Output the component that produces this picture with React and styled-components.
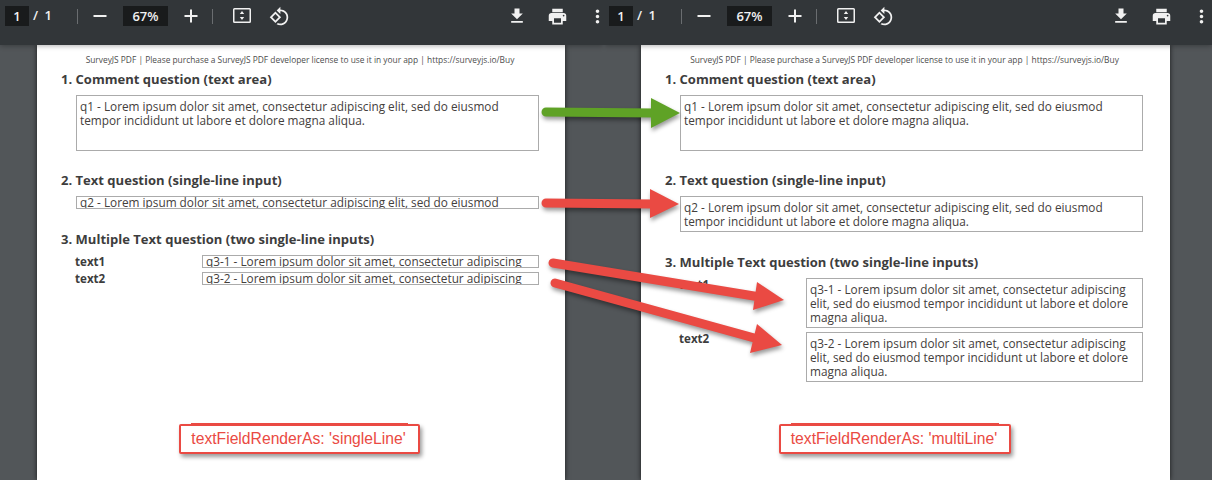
import React from "react";
import styled, { createGlobalStyle } from "styled-components";

const LOREM = "Lorem ipsum dolor sit amet, consectetur adipiscing elit, sed do eiusmod tempor incididunt ut labore et dolore magna aliqua.";
const NOTICE = "SurveyJS PDF | Please purchase a SurveyJS PDF developer license to use it in your app | https://surveyjs.io/Buy";

const GlobalStyle = createGlobalStyle`
  html, body {
    margin: 0;
    padding: 0;
    background: #525659;
  }
`;

const Screen = styled.div`
  position: relative;
  display: flex;
  width: 1212px;
  height: 480px;
  overflow: hidden;
  font-family: "Open Sans", sans-serif;
`;

const Viewer = styled.div`
  display: flex;
  flex-direction: column;
  flex: 0 0 ${(p) => p.$width}px;
  height: 480px;
`;

const Toolbar = styled.div`
  position: relative;
  z-index: 1;
  display: flex;
  align-items: flex-start;
  flex: 0 0 45px;
  padding: 6px ${(p) => p.$endPad}px 0 5px;
  box-sizing: border-box;
  background: #323639;
  color: #f1f1f1;
  box-shadow: 0 1px 5px rgba(0, 0, 0, 0.3);
  clip-path: inset(0 0 -10px 0);
`;

const PageInput = styled.div`
  width: 24px;
  height: 20px;
  background: #191b1c;
  font-size: 13px;
  font-weight: 600;
  line-height: 20px;
  text-align: center;
`;

const PageCount = styled.div`
  width: 44px;
  padding-left: 4px;
  font-size: 13px;
  font-weight: 600;
  line-height: 19px;
  word-spacing: 3px;
  white-space: nowrap;
`;

const Divider = styled.div`
  flex: none;
  width: 1px;
  height: 15px;
  margin: 3px 0 0 ${(p) => p.$left || 0}px;
  background: #6a6d70;
`;

const ZoomBox = styled.div`
  width: 45px;
  height: 20px;
  margin: 0 16px;
  background: #191b1c;
  font-size: 13px;
  font-weight: 600;
  line-height: 20px;
  text-align: center;
`;

const Icon = styled.svg`
  display: block;
  flex: none;
  width: ${(p) => p.$size}px;
  height: ${(p) => p.$size}px;
  margin: ${(p) => p.$top || 0}px ${(p) => p.$right || 0}px 0 ${(p) => p.$left || 0}px;
  fill: #f1f1f1;
`;

const Spacer = styled.div`
  flex: 1;
`;

const PageArea = styled.div`
  flex: 1;
  padding-left: 37px;
  background: #525659;
`;

const Page = styled.div`
  position: relative;
  width: ${(p) => p.$width}px;
  height: 435px;
  padding-top: 9px;
  box-sizing: border-box;
  background: #fff;
  box-shadow: 0 0 5px rgba(0, 0, 0, 0.7);
  color: #3d3d3d;
`;

const Notice = styled.div`
  padding-right: 2px;
  font-size: 8.37px;
  line-height: 12px;
  text-align: center;
  color: #4d4d4d;
  white-space: nowrap;
`;

const Content = styled.div`
  width: 463px;
  margin-left: 39px;
`;

const Heading = styled.h2`
  margin: ${(p) => p.$top}px 0 0 -15px;
  font-size: 13.04px;
  font-weight: 700;
  line-height: 18px;
  color: #3d3d3d;
  white-space: nowrap;
`;

const AnswerBox = styled.div`
  box-sizing: border-box;
  height: ${(p) => p.$height}px;
  margin-top: ${(p) => p.$top || 0}px;
  padding: ${(p) => (p.$single ? "0 3px" : "3px 3px 0")};
  overflow: hidden;
  border: 1px solid #ababab;
  font-size: 11.8px;
  line-height: ${(p) => (p.$single ? "11px" : "14.2px")};
  color: #44403c;
  white-space: ${(p) => (p.$single ? "nowrap" : "normal")};
`;

const TextGrid = styled.div`
  display: grid;
  grid-template-columns: 126px 337px;
  row-gap: 4px;
  margin-top: 7px;
`;

const FieldLabel = styled.div`
  margin-left: -1px;
  font-size: 11.6px;
  font-weight: 700;
  line-height: 13px;
  color: #3d3d3d;
`;

const Callout = styled.div`
  position: absolute;
  top: 379px;
  left: ${(p) => p.$left}px;
  box-sizing: border-box;
  width: ${(p) => p.$width}px;
  height: 30px;
  padding-right: 2px;
  border: 2px solid #ea4a43;
  border-radius: 2px;
  background: #fff;
  box-shadow: 2px 3px 4px rgba(0, 0, 0, 0.4);
  color: #ea4a43;
  font-family: "Liberation Sans", Arial, sans-serif;
  font-size: 15.7px;
  line-height: 25px;
  text-align: center;
  white-space: nowrap;

  &::before {
    content: "";
    position: absolute;
    top: -3px;
    left: 10px;
    right: 10px;
    height: 2px;
    background: #ea4a43;
  }
`;

const ArrowLayer = styled.svg`
  position: absolute;
  top: 0;
  left: 0;
  z-index: 2;
  width: 1212px;
  height: 480px;
  pointer-events: none;
  filter: drop-shadow(1px 3px 2px rgba(0, 0, 0, 0.4));
`;

const DownloadIcon = () => (
  <Icon viewBox="0 0 24 24" $size={20}>
    <path d="M19 9h-4V3H9v6H5l7 7 7-7zM5 18v2h14v-2H5z" />
  </Icon>
);

const PrintIcon = () => (
  <Icon viewBox="0 0 24 24" $size={21} $left={19.5}>
    <path d="M19 8H5c-1.660 0-3 1.340-3 3v6h4v4h12v-4h4v-6c0-1.660-1.340-3-3-3zm-3 11H8v-5h8v5zm3-7c-.55 0-1-.45-1-1s.45-1 1-1 1 .45 1 1-.45 1-1 1zm-1-9H6v4h12V3z" />
  </Icon>
);

const MoreIcon = () => (
  <Icon viewBox="0 0 24 24" $size={21} $left={19} $right={-3.5}>
    <path d="M12 8c1.100 0 2-.9 2-2s-.9-2-2-2-2 .9-2 2 .9 2 2 2zm0 2c-1.100 0-2 .9-2 2s.9 2 2 2 2-.9 2-2-.9-2-2-2zm0 6c-1.100 0-2 .9-2 2s.9 2 2 2 2-.9 2-2-.9-2-2-2z" />
  </Icon>
);

const MinusIcon = () => (
  <Icon viewBox="0 0 14 14" $size={14} $left={15} $top={3}>
    <rect x="0.5" y="6" width="13" height="2" />
  </Icon>
);

const PlusIcon = () => (
  <Icon viewBox="0 0 14 14" $size={14} $top={3}>
    <path d="M6 .5h2V6h5.500v2H8v5.500H6V8H.5V6H6z" />
  </Icon>
);

const FitIcon = () => (
  <Icon viewBox="0 0 20 20" $size={20} $left={19}>
    <path d="M2.500 2h15A1.500 1.500 0 0 1 19 3.500v12a1.500 1.500 0 0 1-1.500 1.500h-15A1.500 1.500 0 0 1 1 15.500v-12A1.500 1.500 0 0 1 2.500 2zm0 1.500v12h15v-12h-15z" fillRule="evenodd" />
    <path d="M10 5l2.200 3H7.800zM10 14l-2.200-3h4.400z" />
  </Icon>
);

const RotateIcon = () => (
  <Icon viewBox="0 0 24 24" $size={21} $left={17}>
    <path d="M7.340 6.410L.86 12.900l6.490 6.480 6.490-6.480-6.500-6.490zM3.690 12.900l3.660-3.660L11 12.900l-3.660 3.660-3.650-3.660zm15.670-6.260C17.610 4.880 15.300 4 13 4V.76L8.760 5 13 9.240V6c1.790 0 3.580.68 4.950 2.050 2.730 2.730 2.730 7.170 0 9.900C16.580 19.320 14.790 20 13 20c-.97 0-1.940-.21-2.840-.61l-1.490 1.490C10.020 21.620 11.510 22 13 22c2.300 0 4.610-.88 6.360-2.640 3.520-3.510 3.520-9.210 0-12.720z" />
  </Icon>
);

const ViewerToolbar = ({ endPad }) => (
  <Toolbar $endPad={endPad}>
    <PageInput>1</PageInput>
    <PageCount>/ 1</PageCount>
    <Divider />
    <MinusIcon />
    <ZoomBox>67%</ZoomBox>
    <PlusIcon />
    <Divider $left={14} />
    <FitIcon />
    <RotateIcon />
    <Spacer />
    <DownloadIcon />
    <PrintIcon />
    <MoreIcon />
  </Toolbar>
);

const Arrow = ({ color, from, to, head }) => (
  <g fill={color} stroke={color}>
    <line x1={from[0]} y1={from[1]} x2={to[0]} y2={to[1]} strokeWidth="9" strokeLinecap="round" />
    <polygon points={head} stroke="none" />
  </g>
);

const App = () => (
  <Screen>
    <GlobalStyle />

    <Viewer $width={604}>
      <ViewerToolbar endPad={0} />
      <PageArea>
        <Page $width={528}>
          <Notice>{NOTICE}</Notice>
          <Content>
            <Heading $top={4}>1. Comment question (text area)</Heading>
            <AnswerBox $height={56} $top={7}>q1 - {LOREM}</AnswerBox>
            <Heading $top={20}>2. Text question (single-line input)</Heading>
            <AnswerBox $single $height={13} $top={7}>q2 - Lorem ipsum dolor sit amet, consectetur adipiscing elit, sed do eiusmod</AnswerBox>
            <Heading $top={21}>3. Multiple Text question (two single-line inputs)</Heading>
            <TextGrid>
              <FieldLabel>text1</FieldLabel>
              <AnswerBox $single $height={13}>q3-1 - Lorem ipsum dolor sit amet, consectetur adipiscing</AnswerBox>
              <FieldLabel>text2</FieldLabel>
              <AnswerBox $single $height={13}>q3-2 - Lorem ipsum dolor sit amet, consectetur adipiscing</AnswerBox>
            </TextGrid>
          </Content>
          <Callout $left={142} $width={241}>textFieldRenderAs: 'singleLine'</Callout>
        </Page>
      </PageArea>
    </Viewer>

    <Viewer $width={608}>
      <ViewerToolbar endPad={4} />
      <PageArea>
        <Page $width={529}>
          <Notice>{NOTICE}</Notice>
          <Content>
            <Heading $top={4}>1. Comment question (text area)</Heading>
            <AnswerBox $height={56} $top={7}>q1 - {LOREM}</AnswerBox>
            <Heading $top={20}>2. Text question (single-line input)</Heading>
            <AnswerBox $height={36} $top={7}>q2 - {LOREM}</AnswerBox>
            <Heading $top={21}>3. Multiple Text question (two single-line inputs)</Heading>
            <TextGrid>
              <FieldLabel>text1</FieldLabel>
              <AnswerBox $height={50}>q3-1 - {LOREM}</AnswerBox>
              <FieldLabel>text2</FieldLabel>
              <AnswerBox $height={50}>q3-2 - {LOREM}</AnswerBox>
            </TextGrid>
          </Content>
          <Callout $left={138} $width={232}>textFieldRenderAs: 'multiLine'</Callout>
        </Page>
      </PageArea>
    </Viewer>

    <ArrowLayer viewBox="0 0 1212 480">
      <Arrow color="#5fa226" from={[546, 112]} to={[655, 113]} head="651,98 680,113 651,128" />
      <Arrow color="#ea4a43" from={[546, 203]} to={[655, 204]} head="650,189 679,204 650,218" />
      <Arrow color="#ea4a43" from={[553, 263]} to={[760, 297]} head="757,282 784,300 753,310" />
      <Arrow color="#ea4a43" from={[555, 283]} to={[758, 339]} head="757,324 782,345 750,353" />
    </ArrowLayer>
  </Screen>
);

export default App;
